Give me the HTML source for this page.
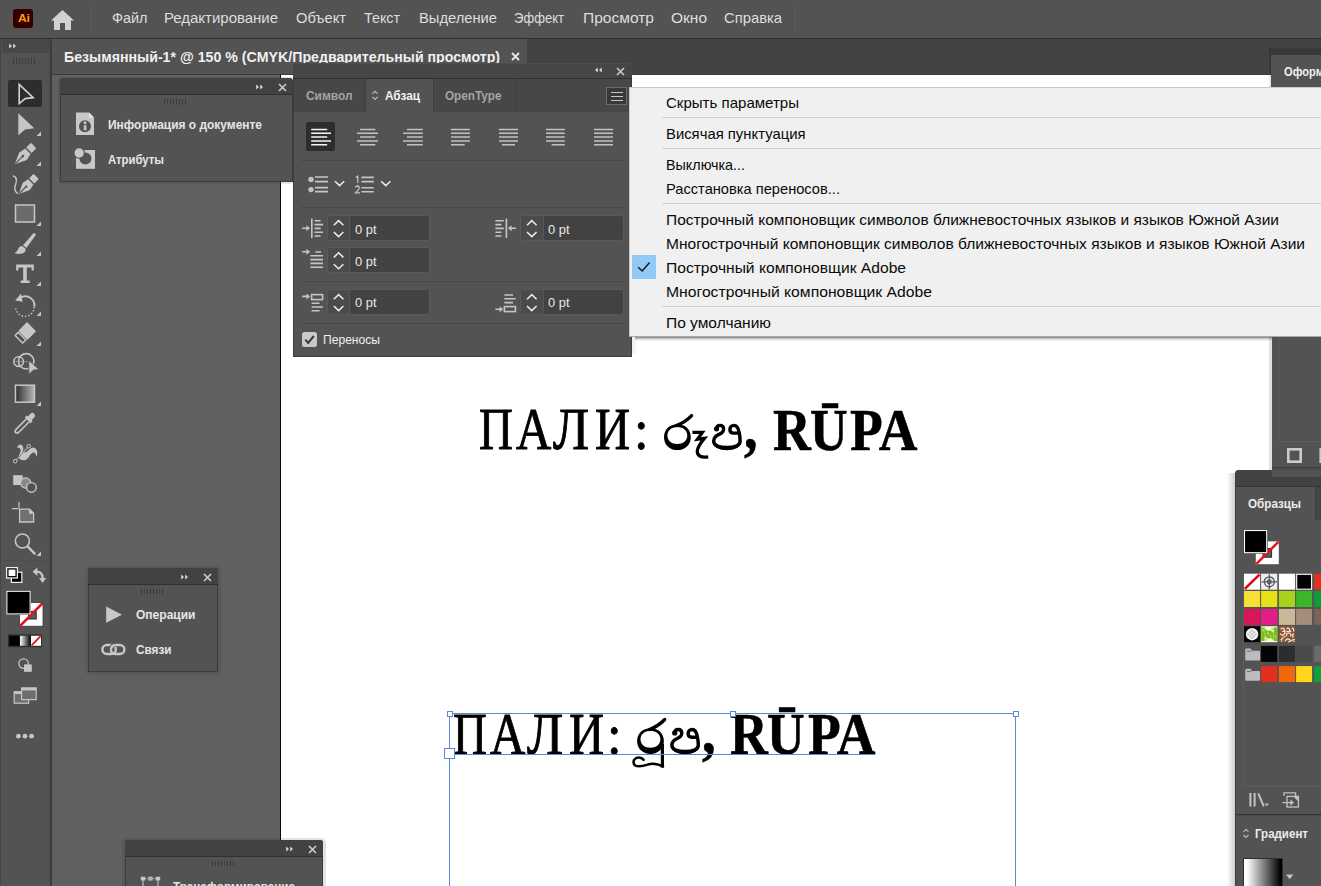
<!DOCTYPE html>
<html lang="ru"><head><meta charset="utf-8"><title>Illustrator</title>
<style>
html,body{margin:0;padding:0;}
body{width:1321px;height:886px;overflow:hidden;position:relative;background:#606060;font-family:"Liberation Sans",sans-serif;}
div,span,svg{position:absolute;box-sizing:border-box;}
.tx{white-space:nowrap;line-height:1;transform-origin:0 0;font-family:"Liberation Sans",sans-serif;}
.sf{font-family:"Liberation Serif",serif;}
.b{font-weight:bold;}
.ts{-webkit-text-stroke:0.9px #000;}
.tb{-webkit-text-stroke:0.6px #000;}
.mi{font-size:15px;color:#dedede;}
.pl{font-size:12.5px;font-weight:bold;color:#e6e6e6;}
.mn{font-size:15px;color:#0a0a0a;}
.pt{font-size:13px;color:#e9e9e9;}
.sep{height:1px;background:#484848;}
.msep{height:1px;background:#d0d0d0;left:662px;width:659px;}
.fld{background:#424242;border:1px solid #5a5a5a;border-radius:2.5px;height:26px;}
.stp{background:#4b4b4b;border-right:1px solid #575757;left:0;top:0;width:22px;height:24px;}
</style></head><body>
<!-- canvas + artboard -->
<div style="left:52px;top:75px;width:229px;height:811px;background:#606060"></div>
<div style="left:280px;top:75px;width:1px;height:811px;background:#0a0a0a"></div>
<div style="left:281px;top:75px;width:1040px;height:811px;background:#fff"></div>
<!-- menu bar -->
<div style="left:0;top:0;width:1321px;height:38px;background:#535353"></div>
<div style="left:0;top:38px;width:1321px;height:1px;background:#2f2f2f"></div>
<div style="left:13px;top:9px;width:20px;height:19px;background:#330000;border-radius:3px"></div>
<span class="tx b" style="left: 17.5px; font-size: 11.5px; color: rgb(255, 154, 0); letter-spacing: -0.3px; top: 13.47px; transform: scaleX(1.0544);">Ai</span>
<svg style="left:50px;top:9px" width="25" height="22" viewBox="0 0 25 22"><path d="M12.5 1 L1 11.6 L4 11.6 L4 21 L10 21 L10 14 L15 14 L15 21 L21 21 L21 11.6 L24 11.6 Z" fill="#d2d2d2"></path></svg>
<div style="left:91px;top:6px;width:1px;height:26px;background:#5e5e5e"></div>
<div style="left:795px;top:6px;width:1px;height:26px;background:#5e5e5e"></div>
<span class="tx mi" style="left: 112px; top: 10.2px; transform: scaleX(0.9623);">Файл</span>
<span class="tx mi" style="left: 164px; top: 10.2px; transform: scaleX(0.9977);">Редактирование</span>
<span class="tx mi" style="left: 296px; top: 10.2px; transform: scaleX(0.9786);">Объект</span>
<span class="tx mi" style="left: 364px; top: 10.2px; transform: scaleX(0.9532);">Текст</span>
<span class="tx mi" style="left: 419px; top: 10.2px; transform: scaleX(0.9813);">Выделение</span>
<span class="tx mi" style="left: 514px; top: 10.2px; transform: scaleX(0.8707);">Эффект</span>
<span class="tx mi" style="left: 583px; top: 10.2px; transform: scaleX(1.0363);">Просмотр</span>
<span class="tx mi" style="left: 671px; top: 10.2px; transform: scaleX(1.0327);">Окно</span>
<span class="tx mi" style="left: 724px; top: 10.2px; transform: scaleX(0.9857);">Справка</span>
<!-- tab bar -->
<div style="left:0;top:39px;width:1321px;height:36px;background:#424242"></div>
<div style="left:52px;top:39px;width:475px;height:35px;background:#535353"></div>
<div style="left:52px;top:74px;width:1269px;height:1px;background:#3a3a3a"></div>
<span class="tx b" style="left: 64px; font-size: 14px; color: rgb(240, 240, 240); top: 50.05px; transform: scaleX(1.0122);">Безымянный-1* @ 150 % (CMYK/Предварительный просмотр)</span>
<svg style="left:510px;top:51px" width="11" height="11" viewBox="0 0 11 11"><path d="M2 2 L9 9 M9 2 L2 9" stroke="#e8e8e8" stroke-width="1.8" fill="none"></path></svg>
<!-- toolbar -->
<div style="left:0;top:39px;width:52px;height:847px;background:#535353"></div>
<div style="left:0;top:39px;width:1.4px;height:847px;background:#454545"></div>
<div style="left:49px;top:39px;width:1px;height:847px;background:#4b4b4b"></div><div style="left:50px;top:39px;width:2px;height:847px;background:#3d3d3d"></div>
<div style="left:2px;top:39px;width:48px;height:14px;background:#484848"></div>
<svg style="left:8px;top:42px" width="10" height="8" viewBox="0 0 10 8"><path d="M1.2 1.5 L4 4 L1.2 6.5 Z M5.2 1.5 L8 4 L5.2 6.5 Z" fill="#d8d8d8"></path></svg>
<svg style="left:12px;top:58px" width="26" height="6" viewBox="0 0 26 6"><path d="M1.5 0v6M4.5 0v6M7.5 0v6M10.5 0v6M13.5 0v6M16.5 0v6M19.5 0v6M22.5 0v6" stroke="#3c3c3c" stroke-width="1"></path></svg>
<div style="left:8px;top:80px;width:34px;height:27px;background:#2d2d2d;border-radius:2px"></div>
<div style="left:4px;top:560px;width:44px;height:1px;background:#4e4e4e"></div>
<span class="tx sf ts" style="left: 478.97px; font-size: 60px; color: rgb(0, 0, 0); top: 399.45px; transform: scaleX(0.7828);">П</span><span class="tx sf ts" style="left: 516.17px; font-size: 60px; color: rgb(0, 0, 0); top: 399.45px; transform: scaleX(0.8155);">А</span><span class="tx sf ts" style="left: 553.4px; font-size: 60px; color: rgb(0, 0, 0); top: 399.45px; transform: scaleX(0.8897);">Л</span><span class="tx sf ts" style="left: 595.06px; font-size: 60px; color: rgb(0, 0, 0); top: 399.45px; transform: scaleX(0.8091);">И</span><span class="tx sf ts" style="left: 633.6px; font-size: 58px; color: rgb(0, 0, 0); top: 401.33px; transform: scaleX(0.9054);">:</span>
<span class="tx sf b tb" style="left: 744.2px; font-size: 64px; color: rgb(0, 0, 0); top: 395px; transform: scaleX(0.85);">,</span>
<span class="tx sf b tb" style="left: 772.6px; font-size: 60px; color: rgb(0, 0, 0); top: 399.55px; transform: scaleX(0.8721);">R</span><span class="tx sf b tb" style="left: 809.6px; font-size: 60px; color: rgb(0, 0, 0); top: 399.55px; transform: scaleX(0.8675);">Ū</span><span class="tx sf b tb" style="left: 850px; font-size: 60px; color: rgb(0, 0, 0); top: 399.55px; transform: scaleX(0.8923);">PA</span>
<svg style="left:655px;top:405px" width="100" height="62" viewBox="655 405 100 62">
<g id="ra"><path fill-rule="evenodd" d="M677.4 424.3 C685.4 424.3 690.8 429.6 690.8 437.2 C690.8 444.8 685 450.1 677.4 450.1 C669.6 450.1 664 444.8 664 437.2 C664 429.6 669.6 424.3 677.4 424.3 Z M677.3 426.9 C671.6 426.9 667.4 430.4 667.4 435.4 C667.4 440.4 671.6 443.9 677.3 443.9 C683 443.9 687.3 440.4 687.3 435.4 C687.3 430.4 683 426.9 677.3 426.9 Z"></path>
<path d="M676.4 425.6 Q685.6 422 691.6 415.6" fill="none" stroke="#000" stroke-width="3.3" stroke-linecap="round"></path></g>
<path d="M692.4 432.4 H702.4 L697.4 439.2 L704.4 438.4 Q697.6 446.4 697.2 451.4 Q697.6 458.4 708.2 456.8" fill="none" stroke="#000" stroke-width="3.2" stroke-linejoin="miter" stroke-linecap="butt"></path>
<g id="pa"><path d="M716.5 428.9 C716.6 426.6 718.2 425.4 720 425.4 C722.2 425.4 723.6 426.9 723.6 429.2 C723.6 431.6 721.8 433.2 719 434.4 C715.6 435.9 713.7 438 713.7 441 C713.7 445.4 719 447.4 726.9 447.4 C734.8 447.4 740.1 445.4 740.1 441 C740.1 438.4 739.8 435.6 739.3 433.2 C738.4 428 737 425.4 734 425.4 C731.4 425.4 729.9 427.2 729.9 429.4 C729.9 431.8 731.4 433.1 733.6 433.1 H739.2" fill="none" stroke="#000" stroke-width="3.4" stroke-linecap="round" stroke-linejoin="round"></path>
<circle cx="716.5" cy="428.8" r="2.6"></circle>
<path d="M712.6 442.4 Q714.4 450.2 726.9 450.2 Q739.4 450.2 741.2 442.4 Q737 446.4 726.9 446.4 Q716.8 446.4 712.6 442.4 Z"></path></g>
</svg>
<!-- second text -->
<span class="tx sf ts" style="left: 452.77px; font-size: 60px; color: rgb(0, 0, 0); top: 703.85px; transform: scaleX(0.7828);">П</span><span class="tx sf ts" style="left: 489.97px; font-size: 60px; color: rgb(0, 0, 0); top: 703.85px; transform: scaleX(0.8155);">А</span><span class="tx sf ts" style="left: 527.2px; font-size: 60px; color: rgb(0, 0, 0); top: 703.85px; transform: scaleX(0.8897);">Л</span><span class="tx sf ts" style="left: 568.86px; font-size: 60px; color: rgb(0, 0, 0); top: 703.85px; transform: scaleX(0.8091);">И</span><span class="tx sf ts" style="left: 607.4px; font-size: 58px; color: rgb(0, 0, 0); top: 705.72px; transform: scaleX(0.9054);">:</span>
<span class="tx sf b tb" style="left: 702px; font-size: 64px; color: rgb(0, 0, 0); top: 699.4px; transform: scaleX(0.85);">,</span>
<span class="tx sf b tb" style="left: 730.4px; font-size: 60px; color: rgb(0, 0, 0); top: 703.95px; transform: scaleX(0.8721);">R</span><span class="tx sf b tb" style="left: 767.4px; font-size: 60px; color: rgb(0, 0, 0); top: 703.95px; transform: scaleX(0.8675);">Ū</span><span class="tx sf b tb" style="left: 807.8px; font-size: 60px; color: rgb(0, 0, 0); top: 703.95px; transform: scaleX(0.8923);">PA</span>
<svg style="left:625px;top:712px" width="100" height="62" viewBox="625 712 100 62">
<g transform="translate(-26.9,303.9)"><path fill-rule="evenodd" d="M677.4 424.3 C685.4 424.3 690.8 429.6 690.8 437.2 C690.8 444.8 685 450.1 677.4 450.1 C669.6 450.1 664 444.8 664 437.2 C664 429.6 669.6 424.3 677.4 424.3 Z M677.3 426.9 C671.6 426.9 667.4 430.4 667.4 435.4 C667.4 440.4 671.6 443.9 677.3 443.9 C683 443.9 687.3 440.4 687.3 435.4 C687.3 430.4 683 426.9 677.3 426.9 Z"></path>
<path d="M676.4 425.6 Q685.6 422 691.6 415.6" fill="none" stroke="#000" stroke-width="3.3" stroke-linecap="round"></path></g>
<path d="M662.4 744 V767.6" fill="none" stroke="#000" stroke-width="3.2"></path>
<path d="M663 766.4 Q655 762 647.6 764.6 Q639 767.4 635.4 765.6 Q632.6 763.6 634 760 Q636.6 756.4 641.6 758.2 L643.6 759.8" fill="none" stroke="#000" stroke-width="2.5" stroke-linecap="round"></path>
<g transform="translate(-41.8,304.1)"><path d="M716.5 428.9 C716.6 426.6 718.2 425.4 720 425.4 C722.2 425.4 723.6 426.9 723.6 429.2 C723.6 431.6 721.8 433.2 719 434.4 C715.6 435.9 713.7 438 713.7 441 C713.7 445.4 719 447.4 726.9 447.4 C734.8 447.4 740.1 445.4 740.1 441 C740.1 438.4 739.8 435.6 739.3 433.2 C738.4 428 737 425.4 734 425.4 C731.4 425.4 729.9 427.2 729.9 429.4 C729.9 431.8 731.4 433.1 733.6 433.1 H739.2" fill="none" stroke="#000" stroke-width="3.4" stroke-linecap="round" stroke-linejoin="round"></path>
<circle cx="716.5" cy="428.8" r="2.6"></circle>
<path d="M712.6 442.4 Q714.4 450.2 726.9 450.2 Q739.4 450.2 741.2 442.4 Q737 446.4 726.9 446.4 Q716.8 446.4 712.6 442.4 Z"></path></g>
</svg>
<!-- text frame selection -->
<div style="left:449px;top:713px;width:567px;height:200px;border:1px solid #5b87d6;border-bottom:none"></div>
<div style="left:449px;top:754px;width:426px;height:1px;background:#5b87d6"></div>
<div style="left:446.5px;top:710.5px;width:6px;height:6px;background:#fff;border:1px solid #5b87d6"></div>
<div style="left:729.5px;top:710.5px;width:6px;height:6px;background:#fff;border:1px solid #5b87d6"></div>
<div style="left:1012.5px;top:710.5px;width:6px;height:6px;background:#fff;border:1px solid #5b87d6"></div>
<div style="left:444px;top:748px;width:11px;height:11px;background:#fff;border:1px solid #5b87d6"></div>
<svg style="left:0;top:0" width="52" height="886" viewBox="0 0 52 886">
<g fill="#c6c6c6">
<!-- corner flyout triangles -->
<path d="M41 131.5v4.5h-4.5z M41 161.5v4.5h-4.5z M41 221.5v4.5h-4.5z M41 251.5v4.5h-4.5z M41 281.5v4.5h-4.5z M41 311.5v4.5h-4.5z M41 341.5v4.5h-4.5z M41 401.5v4.5h-4.5z M41 551.5v4.5h-4.5z"></path>
</g>
<!-- selection tool -->
<path d="M19.2 84.3 L19.2 103.6 L25.2 98.6 L33.2 97.6 Z" fill="none" stroke="#d4d4d4" stroke-width="1.6" stroke-linejoin="miter"></path>
<!-- direct selection -->
<path d="M18.3 113.2 L18.3 135.2 L25 129.5 L34.3 128.3 Z" fill="#c6c6c6"></path>
<!-- pen -->
<g fill="#c6c6c6">
<path d="M14.8 164.2 L19.2 152.4 L25.2 148.6 L30.6 154 L26.8 160 Z"></path>
<path d="M26.2 147.6 L30.2 143.6 Q31 142.8 31.8 143.6 L35.6 147.4 Q36.4 148.2 35.6 149 L31.6 153 Z"></path>
</g>
<path d="M15.4 163.6 L22.4 156.6" stroke="#535353" stroke-width="1.2"></path>
<circle cx="22.9" cy="156.1" r="1.3" fill="#535353"></circle>
<!-- curvature pen -->
<g fill="#c6c6c6">
<path d="M18.8 194 L22.6 183 L28.2 179.2 L33.4 184.4 L29.8 190 Z"></path>
<path d="M29.2 178.2 L32.8 174.6 Q33.6 173.8 34.4 174.6 L38 178.2 Q38.8 179 38 179.8 L34.4 183.4 Z"></path>
</g>
<path d="M19.4 193.4 L25.8 187" stroke="#535353" stroke-width="1.2"></path>
<circle cx="26.2" cy="186.6" r="1.2" fill="#535353"></circle>
<path d="M13.4 176 Q17.6 177.5 16 183 Q13 191 17.6 193.4" fill="none" stroke="#c6c6c6" stroke-width="1.4" stroke-linecap="round"></path>
<!-- rectangle -->
<rect x="15.5" y="205" width="19" height="17" fill="#6b6b6b" stroke="#c6c6c6" stroke-width="1.5"></rect>
<!-- paintbrush -->
<path d="M35.2 233.4 Q36 234.2 35.4 235.4 L26.4 248 L23 245.2 L33.2 233.6 Q34.2 232.6 35.2 233.4 Z" fill="#c6c6c6"></path>
<path d="M22.2 246 L25.6 248.8 Q26 252.6 22 253.6 Q18 254.4 14.6 253 Q17.6 251.6 18.2 249 Q19 246.2 22.2 246 Z" fill="#c6c6c6"></path>
<!-- type -->
<path d="M16.2 264.6 H33.8 V270.6 H31.6 V267.6 H26.8 V280.4 H29.6 V283 H20.6 V280.4 H23.2 V267.6 H18.4 V270.6 H16.2 Z" fill="#c6c6c6"></path>
<!-- rotate -->
<path d="M20.5 297.6 A9.2 9.2 0 0 1 34.4 306.5" fill="none" stroke="#c6c6c6" stroke-width="2"></path>
<path d="M15.2 300.6 L21 293.6 L22.6 301.8 Z" fill="#c6c6c6"></path>
<path d="M34.2 307 A9.2 9.2 0 0 1 15.6 307" fill="none" stroke="#c6c6c6" stroke-width="1.6" stroke-dasharray="1.3 2"></path>
<!-- eraser -->
<path d="M27 322 L36 331.2 L27.4 340 L18.4 330.8 Z" fill="#c6c6c6"></path>
<path d="M18.2 332.2 L25.8 340 L22.6 343 L15.2 335.4 Z" fill="#4c4c4c" stroke="#c6c6c6" stroke-width="1.5" stroke-linejoin="round"></path>
<!-- shape builder -->
<circle cx="18.6" cy="361.6" r="4.8" fill="none" stroke="#c6c6c6" stroke-width="1.6"></circle>
<circle cx="26.2" cy="361.3" r="7.7" fill="none" stroke="#c6c6c6" stroke-width="1.6"></circle>
<path d="M15.5 361.6 H28" stroke="#c6c6c6" stroke-width="1" stroke-dasharray="1.3 1.3"></path>
<path d="M28.8 360.4 L28.8 374.4 L33.2 370.2 L39 369.4 Z" fill="#c6c6c6" stroke="#535353" stroke-width="0.8"></path>
<!-- gradient -->
<defs><linearGradient id="g1" x1="0" x2="1" y1="0" y2="0"><stop offset="0" stop-color="#2c2c2c"></stop><stop offset="1" stop-color="#b8b8b8"></stop></linearGradient>
<linearGradient id="g2" x1="0" x2="1" y1="0" y2="0"><stop offset="0" stop-color="#fff"></stop><stop offset="1" stop-color="#000"></stop></linearGradient></defs>
<rect x="15.5" y="385.2" width="19" height="17" fill="url(#g1)" stroke="#c6c6c6" stroke-width="1.5"></rect>
<!-- eyedropper -->
<path d="M33.8 413.2 Q36 415.4 34 417.8 L31.6 420.2 L32.6 421.2 L30.6 423.2 L24.8 417.4 L26.8 415.4 L27.8 416.4 L30.2 414 Q32 411.8 33.8 413.2 Z" fill="#c6c6c6"></path>
<path d="M26.4 419 L16 429.4 Q14.4 431.4 15.5 432.7 Q17 433.8 18.8 432.2 L29.2 421.8" fill="none" stroke="#c6c6c6" stroke-width="1.6"></path>
<!-- width / puppet -->
<path d="M17 447.4 Q18.6 443.2 22 445.2 Q24.6 447.8 22.2 452.4 Q26.4 453 29.4 449.4 Q33.4 445.6 36.4 449.4 Q38.2 452.6 36.4 456.4 Q35.6 452.2 33 452.4 Q30.4 453.4 28.6 457.4 Q25.2 461.8 20.4 459.6 Q17.6 457.8 19.8 453.8 Q21.6 449.6 19.8 448.2 Q18.6 447.6 17 447.4 Z" fill="#c6c6c6"></path>
<path d="M16 460.4 L28 447" stroke="#c6c6c6" stroke-width="1.2"></path>
<path d="M16.8 459.6 L27.4 447.8" stroke="#535353" stroke-width="0.6"></path>
<circle cx="15.2" cy="461.2" r="1.8" fill="#535353" stroke="#c6c6c6" stroke-width="1"></circle>
<circle cx="28.8" cy="446.2" r="1.8" fill="#535353" stroke="#c6c6c6" stroke-width="1"></circle>
<!-- blend -->
<rect x="13.2" y="475.2" width="9.6" height="9.8" fill="#c6c6c6"></rect>
<circle cx="25.6" cy="483" r="5.2" fill="#8a8a8a" stroke="#c6c6c6" stroke-width="1.2"></circle>
<circle cx="31.4" cy="487.4" r="4.8" fill="#535353" stroke="#c6c6c6" stroke-width="1.4"></circle>
<!-- artboard -->
<path d="M12 508.6 H18.6 M19 502 V508" stroke="#c6c6c6" stroke-width="1.2"></path>
<path d="M19.6 509.2 H29.6 L33.6 513.2 V522 H19.6 Z" fill="#707070" stroke="#c6c6c6" stroke-width="1.3"></path>
<path d="M29.4 509.4 V513.4 H33.4" fill="#c6c6c6" stroke="#c6c6c6" stroke-width="0.8"></path>
<!-- zoom -->
<circle cx="22.4" cy="541" r="7" fill="none" stroke="#c6c6c6" stroke-width="1.6"></circle>
<path d="M27.6 546.4 L34.6 553.6" stroke="#c6c6c6" stroke-width="2.4" stroke-linecap="round"></path>
<!-- default fill/stroke -->
<rect x="11.4" y="572.2" width="10.4" height="10.2" fill="#000" stroke="#f0f0f0" stroke-width="1.2"></rect>
<rect x="6.6" y="567.6" width="10.8" height="10.4" fill="#fff" stroke="#f0f0f0" stroke-width="1.2"></rect>
<rect x="7.9" y="568.9" width="8.2" height="7.8" fill="none" stroke="#000" stroke-width="1.3"></rect>
<!-- swap -->
<path d="M36.6 571.6 Q42.4 571.6 42.6 578" fill="none" stroke="#c6c6c6" stroke-width="2.4"></path>
<path d="M32.6 571.8 L37.4 567.6 V576 Z M39 578 H46.2 L42.6 583 Z" fill="#c6c6c6"></path>
<!-- stroke (none) -->
<rect x="19.6" y="602.6" width="23.4" height="23.6" fill="#fff" stroke="#3a3a3a" stroke-width="0.8"></rect>
<rect x="28.6" y="611.4" width="7.6" height="7.6" fill="#5a5a5a" stroke="#2a2a2a" stroke-width="1"></rect>
<path d="M20.2 625.8 L42.6 603.2" stroke="#e8101c" stroke-width="2.6"></path>
<!-- fill -->
<rect x="6" y="590.4" width="25" height="24.4" fill="#3e3e3e"></rect>
<rect x="6.9" y="591.3" width="23.2" height="22.6" fill="#000" stroke="#fff" stroke-width="1"></rect>
<!-- color / gradient / none -->
<rect x="8" y="634.4" width="34" height="12.8" fill="#2e2e2e"></rect>
<rect x="9.2" y="635.8" width="10.4" height="10" fill="#000"></rect>
<rect x="20" y="635.8" width="10.6" height="10" fill="url(#g2)"></rect>
<rect x="31" y="635.8" width="10" height="10" fill="#fff"></rect>
<path d="M31.6 645.4 L40.6 636.2" stroke="#e8101c" stroke-width="1.8"></path>
<!-- draw mode -->
<circle cx="23.6" cy="663.6" r="4.7" fill="none" stroke="#c6c6c6" stroke-width="1.3"></circle>
<rect x="24" y="664.4" width="7.8" height="7.4" fill="#c6c6c6"></rect>
<!-- screen mode -->
<rect x="14.2" y="691.8" width="14.4" height="11.4" fill="#6e6e6e" stroke="#c6c6c6" stroke-width="1.2"></rect>
<rect x="14.2" y="691.4" width="14.4" height="2.6" fill="#c6c6c6"></rect>
<rect x="21.6" y="688" width="14.6" height="11.6" fill="#6e6e6e" stroke="#c6c6c6" stroke-width="1.2"></rect>
<rect x="21.6" y="687.6" width="14.6" height="2.8" fill="#c6c6c6"></rect>
<!-- more -->
<circle cx="18.4" cy="736.2" r="2.4" fill="#c6c6c6"></circle><circle cx="25" cy="736.2" r="2.4" fill="#c6c6c6"></circle><circle cx="31.6" cy="736.2" r="2.4" fill="#c6c6c6"></circle>
</svg>
<!-- ===== Doc info / attributes panel ===== -->
<div style="left:58px;top:77px;width:237px;height:107px;background:rgba(30,30,30,0.12);border-radius:5px"></div>
<div style="left:60px;top:78px;width:233px;height:104px;background:#535353;border-radius:4px 4px 0 0;border:1px solid #3b3b3b;border-top:none"></div>
<div style="left:60px;top:78px;width:233px;height:16px;background:#424242;border-radius:4px 4px 0 0"></div>
<div style="left:60px;top:94px;width:233px;height:1px;background:#2f2f2f"></div>
<svg style="left:255px;top:83px" width="10" height="8" viewBox="0 0 10 8"><path d="M1.2 1.5 L4 4 L1.2 6.5 Z M5.2 1.5 L8 4 L5.2 6.5 Z" fill="#d8d8d8"></path></svg>
<svg style="left:277px;top:82px" width="11" height="11" viewBox="0 0 11 11"><path d="M2 2 L9 9 M9 2 L2 9" stroke="#c8c8c8" stroke-width="1.7" fill="none"></path></svg>
<svg style="left:163px;top:98.5px" width="26" height="6" viewBox="0 0 26 6"><path d="M1.5 0v5.5M4.5 0v5.5M7.5 0v5.5M10.5 0v5.5M13.5 0v5.5M16.5 0v5.5M19.5 0v5.5M22.5 0v5.5" stroke="#3a3a3a" stroke-width="1"></path></svg>
<svg style="left:74px;top:110px" width="24" height="62" viewBox="74 110 24 62">
<path d="M76 112.6 H89 L94 117.6 V135 H76 Z" fill="#c8c8c8"></path>
<path d="M89 112.6 V117.6 H94" fill="#e6e6e6"></path>
<circle cx="85" cy="126.2" r="6" fill="#535353"></circle>
<circle cx="85" cy="122.8" r="1.5" fill="#c8c8c8"></circle><rect x="83.8" y="125.2" width="2.6" height="5" fill="#c8c8c8"></rect>
<rect x="76" y="150" width="19" height="18.8" fill="#c8c8c8"></rect>
<circle cx="85.4" cy="158.6" r="6" fill="#535353"></circle>
<circle cx="79.2" cy="153" r="5.8" fill="#535353"></circle>
<circle cx="79.2" cy="153" r="4.7" fill="#c8c8c8"></circle>
</svg>
<span class="tx pl" style="left: 108px; top: 119.42px; transform: scaleX(0.9557);">Информация о документе</span>
<span class="tx pl" style="left: 108px; top: 154.22px; transform: scaleX(0.9067);">Атрибуты</span>

<!-- ===== Operations / links panel ===== -->
<div style="left:85px;top:566px;width:136px;height:109px;background:rgba(30,30,30,0.12);border-radius:5px"></div>
<div style="left:88px;top:568px;width:130px;height:104px;background:#535353;border-radius:3px 3px 0 0;border:1px solid #3b3b3b;border-top:none"></div>
<div style="left:88px;top:568px;width:130px;height:16px;background:#424242;border-radius:3px 3px 0 0"></div>
<div style="left:88px;top:584px;width:130px;height:1px;background:#2f2f2f"></div>
<svg style="left:180px;top:573px" width="10" height="8" viewBox="0 0 10 8"><path d="M1.2 1.5 L4 4 L1.2 6.5 Z M5.2 1.5 L8 4 L5.2 6.5 Z" fill="#d8d8d8"></path></svg>
<svg style="left:202px;top:572px" width="11" height="11" viewBox="0 0 11 11"><path d="M2 2 L9 9 M9 2 L2 9" stroke="#c8c8c8" stroke-width="1.7" fill="none"></path></svg>
<svg style="left:140px;top:589px" width="26" height="6" viewBox="0 0 26 6"><path d="M1.5 0v5M4.5 0v5M7.5 0v5M10.5 0v5M13.5 0v5M16.5 0v5M19.5 0v5M22.5 0v5" stroke="#3a3a3a" stroke-width="1"></path></svg>
<svg style="left:100px;top:604px" width="28" height="54" viewBox="100 604 28 54">
<path d="M106.2 606.6 V622.8 L122 614.7 Z" fill="#c8c8c8"></path>
<rect x="102.4" y="645" width="13.4" height="9" rx="4.5" fill="none" stroke="#c8c8c8" stroke-width="2.4"></rect>
<rect x="111" y="645" width="13.4" height="9" rx="4.5" fill="none" stroke="#c8c8c8" stroke-width="2.4"></rect>
<path d="M111 649.5 Q111 645 115.5 645" fill="none" stroke="#535353" stroke-width="3.8"></path>
<path d="M111 649.8 Q111 645 115.8 645" fill="none" stroke="#c8c8c8" stroke-width="2.4"></path>
</svg>
<span class="tx pl" style="left: 136px; top: 608.62px; transform: scaleX(0.9616);">Операции</span>
<span class="tx pl" style="left: 136px; top: 643.62px; transform: scaleX(0.9404);">Связи</span>

<!-- ===== Transform panel (cut off) ===== -->
<div style="left:122px;top:838px;width:204px;height:48px;background:rgba(30,30,30,0.12);border-radius:5px 5px 0 0"></div>
<div style="left:125px;top:840px;width:198px;height:50px;background:#535353;border-radius:3px 3px 0 0;border:1px solid #3b3b3b;border-top:none"></div>
<div style="left:125px;top:840px;width:198px;height:16px;background:#424242;border-radius:3px 3px 0 0"></div>
<div style="left:125px;top:856px;width:198px;height:1px;background:#2f2f2f"></div>
<svg style="left:285px;top:845px" width="10" height="8" viewBox="0 0 10 8"><path d="M1.2 1.5 L4 4 L1.2 6.5 Z M5.2 1.5 L8 4 L5.2 6.5 Z" fill="#d8d8d8"></path></svg>
<svg style="left:307px;top:843.5px" width="11" height="11" viewBox="0 0 11 11"><path d="M2 2 L9 9 M9 2 L2 9" stroke="#c8c8c8" stroke-width="1.7" fill="none"></path></svg>
<svg style="left:210.5px;top:860.5px" width="26" height="6" viewBox="0 0 26 6"><path d="M1.5 0v5M4.5 0v5M7.5 0v5M10.5 0v5M13.5 0v5M16.5 0v5M19.5 0v5M22.5 0v5" stroke="#3a3a3a" stroke-width="1"></path></svg>
<svg style="left:140px;top:876px" width="22" height="10" viewBox="140 876 22 10">
<path d="M140.8 876.8 h4.4 v3.6 h-4.4z M148.3 876.8 h4.4 v3.6 h-4.4z M155.8 876.8 h4.4 v3.6 h-4.4z" fill="#c8c8c8"></path>
<path d="M143 880 V886 M158 880 V886" stroke="#b0b0b0" stroke-width="1.4" fill="none"></path><path d="M145 878.6 H156" stroke="#9a9a9a" stroke-width="1" fill="none"></path>
</svg>
<span class="tx pl" style="left: 173px; top: 880.82px; transform: scaleX(0.9313);">Трансформирование</span>
<!-- ===== Paragraph panel ===== -->
<div style="left:632px;top:337px;width:6px;height:17px;background:linear-gradient(to right,rgba(0,0,0,0.07),rgba(0,0,0,0))"></div>
<div style="left:293px;top:63px;width:339px;height:294px;background:#535353;border-radius:4px 4px 0 0;border:1px solid #3c3c3c;border-top:none"></div>
<div style="left:293px;top:63px;width:339px;height:16px;background:#464646;border-radius:4px 4px 0 0;border-top:1px solid #4e4e4e"></div>
<div style="left:293px;top:78px;width:339px;height:1px;background:#2f2f2f"></div>
<div style="left:294px;top:79px;width:337px;height:33px;background:#474747"></div>
<div style="left:366px;top:79px;width:67px;height:34px;background:#535353"></div>
<div style="left:365px;top:79px;width:1px;height:33px;background:#3f3f3f"></div>
<div style="left:433px;top:79px;width:1px;height:33px;background:#3f3f3f"></div>
<div style="left:516px;top:79px;width:1px;height:33px;background:#404040"></div>
<svg style="left:594px;top:66px" width="10" height="8" viewBox="0 0 10 8"><path d="M3.8 1.5 L1 4 L3.8 6.5 Z M7.8 1.5 L5 4 L7.8 6.5 Z" fill="#d8d8d8"></path></svg>
<svg style="left:615px;top:66px" width="11" height="11" viewBox="0 0 11 11"><path d="M2 2 L9 9 M9 2 L2 9" stroke="#c8c8c8" stroke-width="1.7" fill="none"></path></svg>
<span class="tx b" style="left: 306px; font-size: 12.5px; color: rgb(164, 164, 164); top: 89.62px; transform: scaleX(0.9538);">Символ</span>
<svg style="left:371px;top:89px" width="8" height="13" viewBox="0 0 8 13"><path d="M1.5 4.8 L4 2.3 L6.5 4.8 M1.5 8 L4 10.5 L6.5 8" fill="none" stroke="#b8b8b8" stroke-width="1.2"></path></svg>
<span class="tx b" style="left: 385px; font-size: 12.5px; color: rgb(242, 242, 242); top: 89.62px; transform: scaleX(0.9432);">Абзац</span>
<span class="tx b" style="left: 445px; font-size: 12.5px; color: rgb(164, 164, 164); top: 89.62px; transform: scaleX(0.9385);">OpenType</span>
<div style="left:606px;top:87px;width:21px;height:18px;background:#383838;border:1px solid #6c6c6c"></div>
<div style="left:611px;top:91.6px;width:12px;height:1.9px;background:#c6c6c6"></div>
<div style="left:611px;top:95.6px;width:12px;height:1.9px;background:#c6c6c6"></div>
<div style="left:611px;top:99.6px;width:12px;height:1.9px;background:#c6c6c6"></div>
<!-- alignment row -->
<div style="left:305.5px;top:122px;width:29.5px;height:29px;background:#2d2d2d;border-radius:2px"></div>
<svg style="left:293px;top:120px" width="339" height="34" viewBox="293 120 339 34">
<g stroke="#f4f4f4" stroke-width="1.5"><path d="M311.2 129.4h16M311.2 133.2h19.8M311.2 137h16M311.2 140.9h19.8M311.2 144.7h16"></path></g>
<g stroke="#c2c2c2" stroke-width="1.5">
<path d="M360 129.4h15.4M357 133.2h21M360 137h15.4M357 140.9h21M360 144.7h15.4"></path>
<path d="M407 129.4h15.8M403 133.2h19.8M407 137h15.8M403 140.9h19.8M407 144.7h15.8"></path>
<path d="M451 129.4h18.8M451 133.2h18.8M451 137h18.8M451 140.9h18.8M451 144.7h13.6"></path>
<path d="M499 129.4h19M499 133.2h19M499 137h19M499 140.9h19M502 144.7h13"></path>
<path d="M546 129.4h18.8M546 133.2h18.8M546 137h18.8M546 140.9h18.8M551.6 144.7h13.2"></path>
<path d="M594 129.4h19M594 133.2h19M594 137h19M594 140.9h19M594 144.7h19"></path>
</g></svg>
<div class="sep" style="left:301px;top:160px;width:323px"></div>
<!-- bullets row -->
<svg style="left:300px;top:170px" width="100" height="28" viewBox="300 170 100 28">
<g fill="#c2c2c2"><circle cx="311" cy="179.4" r="2.7"></circle><circle cx="311" cy="189.6" r="2.7"></circle></g>
<g stroke="#c6c6c6" stroke-width="1.6"><path d="M315 177h13M315 181.6h13M315 187.6h13M315 191.6h13"></path>
<path d="M361.4 177.4h12.4M361.4 181.6h12.4M361.4 187.8h12.4M361.4 191.8h12.4"></path></g>
<g fill="none" stroke="#ededed" stroke-width="1.5"><path d="M335 181.2 L339.6 185.6 L344.2 181.2"></path><path d="M381.2 181.2 L385.8 185.6 L390.4 181.2"></path></g>
<g fill="none" stroke="#c2c2c2" stroke-width="1.3"><path d="M355.8 177.6 L357.8 176.2 V183"></path><path d="M355.4 187.6 Q355.8 186 357.6 186 Q359.6 186.2 359.2 188.4 Q358.6 190.2 355.6 192.8 H360"></path></g>
</svg>
<div class="sep" style="left:301px;top:207px;width:323px"></div>
<!-- fields -->
<div class="fld" style="left:327.4px;top:215px;width:102.6px"><div class="stp"></div></div>
<div class="fld" style="left:327.4px;top:247px;width:102.6px"><div class="stp"></div></div>
<div class="fld" style="left:327.4px;top:289px;width:102.6px"><div class="stp"></div></div>
<div class="fld" style="left:520px;top:215px;width:104px"><div class="stp" style="width:23px"></div></div>
<div class="fld" style="left:520px;top:289px;width:104px"><div class="stp" style="width:23px"></div></div>
<svg style="left:293px;top:214px" width="339" height="104" viewBox="293 214 339 104">
<g fill="none" stroke="#ededed" stroke-width="1.5">
<path d="M333.8 225.2 L338.6 220.6 L343.4 225.2 M333.8 232 L338.6 236.6 L343.4 232"></path>
<path d="M333.8 257.4 L338.6 252.8 L343.4 257.4 M333.8 264.2 L338.6 268.8 L343.4 264.2"></path>
<path d="M333.8 299.2 L338.6 294.6 L343.4 299.2 M333.8 306 L338.6 310.6 L343.4 306"></path>
<path d="M527 225.2 L531.8 220.6 L536.6 225.2 M527 232 L531.8 236.6 L536.6 232"></path>
<path d="M527 299.2 L531.8 294.6 L536.6 299.2 M527 306 L531.8 310.6 L536.6 306"></path>
</g>
<g stroke="#c6c6c6" stroke-width="1.6" fill="none">
<!-- left indent -->
<path d="M311.8 218.4 V238 M314.6 220.8h6 M314.6 224.6h8.4 M314.6 228.4h6 M314.6 232.2h8.4 M314.6 236h6 M302.2 228.2h7"></path>
<!-- first-line indent -->
<path d="M315.4 252h5.6 M310.4 255.8h12.6 M310.4 259.6h12.6 M310.4 263.4h12.6 M310.4 267.2h12.6 M302.2 251.8h7"></path>
<!-- space before -->
<path d="M302.2 296.4h7 M311.6 303.2h8 M311.6 307h11.4 M311.6 310.8h8"></path>
<rect x="311.6" y="294.6" width="11" height="5"></rect>
<!-- right indent -->
<path d="M506.4 218.4 V238 M495.4 220.8h8.4 M495.4 224.6h6 M495.4 228.4h8.4 M495.4 232.2h6 M495.4 236h6 M509 228.2h7"></path>
<!-- space after -->
<path d="M504.4 295h8.6 M504.4 298.8h11.2 M504.4 302.6h8.6 M495.4 309.2h7"></path>
<rect x="504.4" y="306.6" width="11" height="5"></rect>
</g>
<g fill="#c2c2c2">
<path d="M306.4 225.2 L310 228.2 L306.4 231.2 Z M306.4 248.8 L310 251.8 L306.4 254.8 Z M306.4 293.4 L310 296.4 L306.4 299.4 Z M499.6 306.2 L503.2 309.2 L499.6 312.2 Z"></path>
<path d="M511.6 225.2 L508 228.2 L511.6 231.2 Z"></path>
</g>
</svg>
<span class="tx pt" style="left: 354.5px; top: 223px; transform: scaleX(0.9914);">0 pt</span>
<span class="tx pt" style="left: 354.5px; top: 255px; transform: scaleX(0.9914);">0 pt</span>
<span class="tx pt" style="left: 354.5px; top: 296px; transform: scaleX(0.9914);">0 pt</span>
<span class="tx pt" style="left: 548px; top: 223px; transform: scaleX(0.9914);">0 pt</span>
<span class="tx pt" style="left: 548px; top: 296px; transform: scaleX(0.9914);">0 pt</span>
<div class="sep" style="left:301px;top:281px;width:323px"></div>
<div class="sep" style="left:301px;top:323px;width:323px"></div>
<div style="left:301.5px;top:331.5px;width:15px;height:15px;background:#c9c9c9;border-radius:2.5px"></div>
<svg style="left:301.5px;top:331.5px" width="15" height="15" viewBox="0 0 15 15"><path d="M3.2 7.6 L6.2 10.8 L11.8 4" fill="none" stroke="#3e3e3e" stroke-width="2.1"></path></svg>
<span class="tx" style="left: 323px; font-size: 13px; color: rgb(240, 240, 240); top: 333.4px; transform: scaleX(0.9299);">Переносы</span>
<!-- ===== Context menu ===== -->
<div style="left:635px;top:337px;width:700px;height:4px;background:linear-gradient(to bottom,rgba(0,0,0,0.5),rgba(0,0,0,0.18) 45%,rgba(0,0,0,0))"></div>
<div style="left:629px;top:87px;width:700px;height:250px;background:#f0f0f0;border:1px solid #c8c8c8;border-bottom-color:#a8a8a8"></div>
<span class="tx mn" style="left: 666px; top: 94.7px; transform: scaleX(1.0025);">Скрыть параметры</span>
<div class="msep" style="top:117px"></div>
<span class="tx mn" style="left: 666px; top: 125.7px; transform: scaleX(0.99);">Висячая пунктуация</span>
<div class="msep" style="top:148px"></div>
<span class="tx mn" style="left: 666px; top: 156.7px; transform: scaleX(0.9547);">Выключка...</span>
<span class="tx mn" style="left: 666px; top: 180.7px; transform: scaleX(0.9767);">Расстановка переносов...</span>
<div class="msep" style="top:203px"></div>
<span class="tx mn" style="left: 666px; top: 211.7px; transform: scaleX(1.0325);">Построчный компоновщик символов ближневосточных языков и языков Южной Азии</span>
<span class="tx mn" style="left: 666px; top: 235.7px; transform: scaleX(1.0353);">Многострочный компоновщик символов ближневосточных языков и языков Южной Азии</span>
<div style="left:632px;top:255px;width:24px;height:24px;background:#91c9f7"></div>
<svg style="left:632px;top:255px" width="24" height="24" viewBox="0 0 24 24"><path d="M6.2 12.2 L10.2 16 L17.6 7.6" fill="none" stroke="#1a1a1a" stroke-width="1.5"></path></svg>
<span class="tx mn" style="left: 666px; top: 259.7px; transform: scaleX(1.041);">Построчный компоновщик Adobe</span>
<span class="tx mn" style="left: 666px; top: 283.7px; transform: scaleX(1.0471);">Многострочный компоновщик Adobe</span>
<div class="msep" style="top:306px"></div>
<span class="tx mn" style="left: 666px; top: 314.7px; transform: scaleX(1.035);">По умолчанию</span>
<!-- ===== Appearance panel (right, mostly hidden) ===== -->
<div style="left:1269px;top:48px;width:60px;height:27px;background:rgba(0,0,0,0.15)"></div><div style="left:1268px;top:75px;width:3px;height:12px;background:linear-gradient(to right,rgba(0,0,0,0),rgba(0,0,0,0.14))"></div>
<div style="left:1271px;top:50px;width:50px;height:37px;background:#535353"></div>
<div style="left:1271px;top:50px;width:50px;height:5px;background:#383838"></div>
<span class="tx b" style="left: 1284px; font-size: 12.5px; color: rgb(240, 240, 240); top: 66.42px; transform: scaleX(0.8902);">Оформл</span>
<div style="left:1269px;top:337px;width:3px;height:134px;background:rgba(0,0,0,0.12)"></div>
<div style="left:1272px;top:337px;width:49px;height:131px;background:#535353"></div>
<div style="left:1272px;top:337px;width:49px;height:131px;overflow:hidden"><div style="left:6px;top:-10px;width:60px;height:115px;border:1px solid #5e5e5e;border-radius:3px"></div></div>
<svg style="left:1285px;top:446px" width="36" height="19" viewBox="1285 446 36 19"><rect x="1288.300" y="449.300" width="12.4" height="12.4" fill="none" stroke="#cbcbcb" stroke-width="2.6"></rect><rect x="1320.700" y="449.300" width="12.4" height="12.4" fill="none" stroke="#cbcbcb" stroke-width="2.6"></rect></svg>

<div style="left:1272px;top:467px;width:49px;height:1px;background:#3c3c3c"></div><div style="left:1272px;top:468px;width:49px;height:9px;background:#4c4c4c"></div>
<!-- ===== Swatches panel ===== -->
<div style="left:1227px;top:473px;width:8px;height:413px;background:linear-gradient(to right,rgba(0,0,0,0),rgba(0,0,0,0.2))"></div>
<div style="left:1235px;top:470px;width:86px;height:416px;background:#535353;border-radius:4px 0 0 0"></div>
<div style="left:1235px;top:470px;width:37px;height:17px;background:#424242;border-radius:4px 0 0 0"></div>
<div style="left:1272px;top:477px;width:49px;height:10px;background:#424242"></div>
<div style="left:1235px;top:487px;width:86px;height:33px;background:#454545"></div>
<div style="left:1235px;top:486px;width:86px;height:1px;background:#333"></div>
<div style="left:1236px;top:487px;width:79px;height:34px;background:#535353"></div>
<div style="left:1315px;top:487px;width:1px;height:33px;background:#3c3c3c"></div>
<div style="left:1235px;top:474px;width:1px;height:412px;background:#404040"></div>
<span class="tx b" style="left: 1248px; font-size: 12.5px; color: rgb(236, 236, 236); top: 497.82px; transform: scaleX(0.9337);">Образцы</span>
<!-- fill/stroke -->
<svg style="left:1240px;top:526px" width="81" height="165" viewBox="1240 526 81 165">
<rect x="1255.8" y="541.4" width="23" height="22.8" fill="#fff"></rect>
<rect x="1263" y="548.6" width="8.6" height="8.6" fill="#5a5a5a" stroke="#2a2a2a" stroke-width="1"></rect>
<path d="M1256.4 563.8 L1278.4 541.8" stroke="#e8101c" stroke-width="2.4"></path>
<rect x="1243.4" y="529.4" width="24.4" height="24.4" fill="#3a3a3a"></rect>
<rect x="1244.5" y="530.5" width="22.2" height="22.2" fill="#000" stroke="#fff" stroke-width="1.1"></rect>
<!-- row 1 -->
<rect x="1243.9" y="573.7" width="16.2" height="16" fill="#fff"></rect><path d="M1244.8 588.8 L1259.4 574.6" stroke="#e3000f" stroke-width="2.5"></path>
<rect x="1261.1" y="573.7" width="16.2" height="16" fill="#eeeef2"></rect>
<g fill="none" stroke="#565656" stroke-width="1.25"><circle cx="1269.3" cy="581.8" r="5"></circle><circle cx="1269.3" cy="581.8" r="1.9"></circle><path d="M1261.6 581.8h15.4M1269.3 574.2v15.2"></path></g>
<rect x="1278.9" y="573.7" width="16.2" height="16" fill="#fff"></rect>
<rect x="1296.7" y="574.3" width="14.9" height="14.9" fill="#000" stroke="#fff" stroke-width="1.1"></rect>
<rect x="1314.1" y="573.7" width="8" height="16" fill="#e0301e"></rect>
<!-- row 2 -->
<rect x="1243.9" y="591" width="16.2" height="16" fill="#f5e033"></rect><rect x="1261.1" y="591" width="16.2" height="16" fill="#e6e014"></rect><rect x="1278.9" y="591" width="16.2" height="16" fill="#a5d31c"></rect><rect x="1296.1" y="591" width="16" height="16" fill="#3cb527"></rect><rect x="1314.1" y="591" width="8" height="16" fill="#0f9a3c"></rect>
<!-- row 3 -->
<rect x="1243.9" y="608.9" width="16.2" height="16" fill="#d9165c"></rect><rect x="1261.1" y="608.9" width="16.2" height="16" fill="#e61c88"></rect><rect x="1278.9" y="608.9" width="16.2" height="16" fill="#c8b899"></rect><rect x="1296.1" y="608.9" width="16" height="16" fill="#a58d7c"></rect><rect x="1314.1" y="608.9" width="8" height="16" fill="#7a6456"></rect>
<!-- row 4 -->
<rect x="1243.9" y="626.2" width="16.2" height="16" fill="#050505"></rect><circle cx="1252.1" cy="634.2" r="6.2" fill="#f2f2f2"></circle>
<g fill="#c4c4c4"><rect x="1251.15" y="629.45" width="1.9" height="1.9"></rect><rect x="1249.25" y="631.35" width="1.9" height="1.9"></rect><rect x="1253.05" y="631.35" width="1.9" height="1.9"></rect><rect x="1247.35" y="633.25" width="1.9" height="1.9"></rect><rect x="1251.15" y="633.25" width="1.9" height="1.9"></rect><rect x="1254.95" y="633.25" width="1.9" height="1.9"></rect><rect x="1249.25" y="635.15" width="1.9" height="1.9"></rect><rect x="1253.05" y="635.15" width="1.9" height="1.9"></rect><rect x="1251.15" y="637.05" width="1.9" height="1.9"></rect></g>
<rect x="1261.1" y="626.2" width="16.2" height="16" fill="#f4f8dc"></rect>
<g fill="#78bf1e"><rect x="1261.1" y="627.4" width="3.6" height="13.6"></rect><rect x="1273.7" y="627.4" width="3.6" height="13.6"></rect><ellipse cx="1269.2" cy="634.4" rx="4.4" ry="4"></ellipse><rect x="1264.7" y="629.4" width="2" height="3"></rect><rect x="1271.7" y="636.4" width="2" height="3"></rect></g>
<g fill="#b9dc3a"><rect x="1262.3" y="628.6" width="1.4" height="3"></rect><rect x="1274.9" y="635.4" width="1.4" height="3"></rect><circle cx="1268" cy="633.4" r="1.2"></circle><circle cx="1270.6" cy="636" r="1.1"></circle><rect x="1265.6" y="638.4" width="1.6" height="2"></rect><rect x="1271.4" y="628" width="1.6" height="2"></rect></g>
<rect x="1278.9" y="626.2" width="16.2" height="16" fill="#8c5636"></rect>
<g fill="none" stroke="#f6ece2" stroke-width="1.2" stroke-linecap="round"><path d="M1281 629q1.6-2 3.2 0t-1.4 2.4M1287 628.4q2.6-.8 2.6 1.6t-2.6 1.2M1292 628q2.2.6 1.6 3M1280.4 634q1.4 1.8 3.4.4t.4-3M1286.6 635.6q-.6-2.8 2-2.6t2.2 2.8M1293.4 634q-1.6 1.2-.4 3M1281 639.6q2-.6 2.4-2.6M1285.4 640.6q1.800-2.8 4-1.200t-.6 2.400M1291.600 640.800q1-1.600 2.600-1.200"></path></g>
<g fill="#f6ece2"><circle cx="1284.8" cy="636.6" r=".8"></circle><circle cx="1290.6" cy="631.4" r=".8"></circle><circle cx="1281.6" cy="641" r=".7"></circle><circle cx="1294" cy="641.4" r=".7"></circle><circle cx="1286" cy="631.8" r=".7"></circle></g>
<!-- row 5 -->
<path d="M1245.2 649.8000000000001 q0 -1.2 1.2 -1.2 h4 l1.8 2.2 h6.800 q1 0 1 1 v7.800 q0 1 -1 1 h-12.800 q-1 0 -1 -1z" fill="#bcbcbc"></path><path d="M1246.800 651.2h4.600" stroke="#6a6a6a" stroke-width="1"></path>
<rect x="1261.1" y="645.9" width="16.2" height="16" fill="#050505"></rect><rect x="1278.9" y="645.9" width="16.2" height="16" fill="#2d2d2d"></rect><rect x="1296.1" y="645.9" width="16" height="16" fill="#4a4a4a"></rect><rect x="1314.1" y="645.9" width="8" height="16" fill="#6a6a6a"></rect>
<!-- row 6 -->
<path d="M1245.2 670.0 q0 -1.2 1.2 -1.2 h4 l1.8 2.2 h6.800 q1 0 1 1 v7.800 q0 1 -1 1 h-12.800 q-1 0 -1 -1z" fill="#bcbcbc"></path><path d="M1246.800 671.4h4.600" stroke="#6a6a6a" stroke-width="1"></path>
<rect x="1261.1" y="666.1" width="16.2" height="16" fill="#e0301e"></rect><rect x="1278.9" y="666.1" width="16.2" height="16" fill="#f0660a"></rect><rect x="1296.1" y="666.1" width="16" height="16" fill="#ffd61c"></rect><rect x="1314.1" y="666.1" width="8" height="16" fill="#0fa03c"></rect>
</svg>
<div style="left:1243px;top:573px;width:90px;height:214px;border:1px solid #5c5c5c;border-top:none;border-radius:0 0 0 3px"></div>
<!-- bottom icons -->
<svg style="left:1246px;top:789px" width="60" height="22" viewBox="1246 789 60 22">
<g stroke="#c2c2c2" stroke-width="2" fill="none"><path d="M1250.4 793v13.6M1254.6 793v13.6M1258.2 793.4l5.6 13"></path></g>
<path d="M1264.6 803.6h4.4l-2.2 2.6z" fill="#c2c2c2"></path>
<g stroke="#c2c2c2" stroke-width="1.3" fill="none"><rect x="1287" y="796.4" width="11.4" height="10.6"></rect><path d="M1284 796v-3.2h11.6v3.4M1282.4 802.6h9"></path></g>
<path d="M1290.4 799.4l3.6 3.2l-3.6 3.2z M1293.4 796.4h5v5z" fill="#c2c2c2"></path>
</svg>
<div style="left:1236px;top:814px;width:85px;height:1px;background:#333"></div>
<div style="left:1237px;top:815px;width:84px;height:1px;background:#4a4a4a"></div>
<svg style="left:1241.5px;top:826.5px" width="8" height="13" viewBox="0 0 8 13"><path d="M1.5 4.8 L4 2.3 L6.5 4.8 M1.5 8 L4 10.5 L6.5 8" fill="none" stroke="#b8b8b8" stroke-width="1.2"></path></svg>
<span class="tx b" style="left: 1255px; font-size: 12.5px; color: rgb(236, 236, 236); top: 828.42px; transform: scaleX(0.9225);">Градиент</span>
<div style="left:1243px;top:857.5px;width:40px;height:30px;background:linear-gradient(to right,#fff 8%,#000 96%);border:1px solid #2e2e2e"></div>
<svg style="left:1285px;top:873px" width="10" height="8" viewBox="0 0 10 8"><path d="M1 1.6h7.4l-3.7 4.6z" fill="#c2c2c2"></path></svg>

</body></html>
